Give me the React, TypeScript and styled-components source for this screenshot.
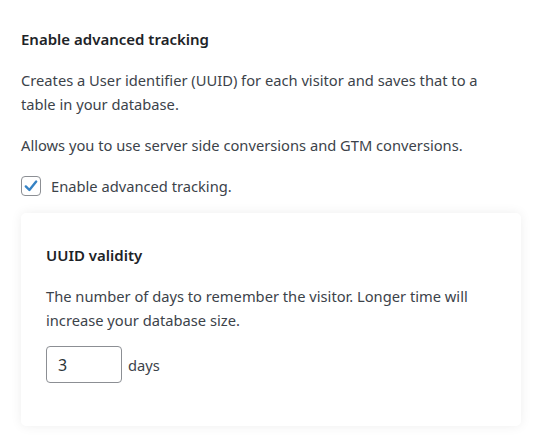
import React from "react";
import styled, { createGlobalStyle } from "styled-components";

const Global = createGlobalStyle`
  html, body { margin: 0; padding: 0; background: #ffffff; }
  body { font-family: "Noto Sans", "Open Sans", sans-serif; color: #3c434a; }
`;

const Page = styled.div`
  width: 536px;
  height: 444px;
  box-sizing: border-box;
  padding: 29px 15px 0 21px;
  display: flex;
  flex-direction: column;
`;

const Heading = styled.h3`
  margin: 0;
  font-size: 15px;
  line-height: 20px;
  font-weight: 600;
  color: #1d2327;
`;

const Text = styled.p<{ $top?: number }>`
  margin: ${(p) => p.$top ?? 17}px 0 0;
  max-width: 478px;
  font-size: 14.7px;
  line-height: 24px;
  color: #3c434a;
`;

const CheckRow = styled.label`
  display: flex;
  align-items: center;
  gap: 10px;
  margin-top: 17px;
  font-size: 14.7px;
  line-height: 24px;
  color: #3c434a;
`;

const Box = styled.span`
  width: 20px;
  height: 20px;
  box-sizing: border-box;
  border: 1px solid #8c8f94;
  border-radius: 4px;
  display: flex;
  align-items: center;
  justify-content: center;
  background: #fff;
`;

const Card = styled.section`
  margin-top: 15px;
  background: #fff;
  border-radius: 5px;
  box-shadow: 0 0 12px rgba(0, 0, 0, 0.07);
  padding: 32px 25px 43px;
`;

const InputRow = styled.div`
  display: flex;
  align-items: center;
  gap: 6px;
  margin-top: 14px;
  font-size: 14.7px;
  color: #3c434a;
`;

const NumberBox = styled.div`
  width: 76px;
  height: 37px;
  box-sizing: border-box;
  border: 1px solid #8c8f94;
  border-radius: 4px;
  padding: 0 11px;
  display: flex;
  align-items: center;
  font-size: 16px;
  color: #2c3338;
`;

export default function App() {
  return (
    <>
      <Global />
      <Page>
        <Heading>Enable advanced tracking</Heading>
        <Text $top={19}>
          Creates a User identifier (UUID) for each visitor and saves that to a
          table in your database.
        </Text>
        <Text>Allows you to use server side conversions and GTM conversions.</Text>
        <CheckRow>
          <Box>
            <svg width="16" height="16" viewBox="0 0 20 20">
              <path
                d="M3.5 10.5 L8 15 L16.5 4.5"
                fill="none"
                stroke="#3582c4"
                strokeWidth="3"
                strokeLinecap="round"
                strokeLinejoin="round"
              />
            </svg>
          </Box>
          Enable advanced tracking.
        </CheckRow>
        <Card>
          <Heading>UUID validity</Heading>
          <Text $top={19}>
            The number of days to remember the visitor. Longer time will
            increase your database size.
          </Text>
          <InputRow>
            <NumberBox>3</NumberBox>
            days
          </InputRow>
        </Card>
      </Page>
    </>
  );
}
